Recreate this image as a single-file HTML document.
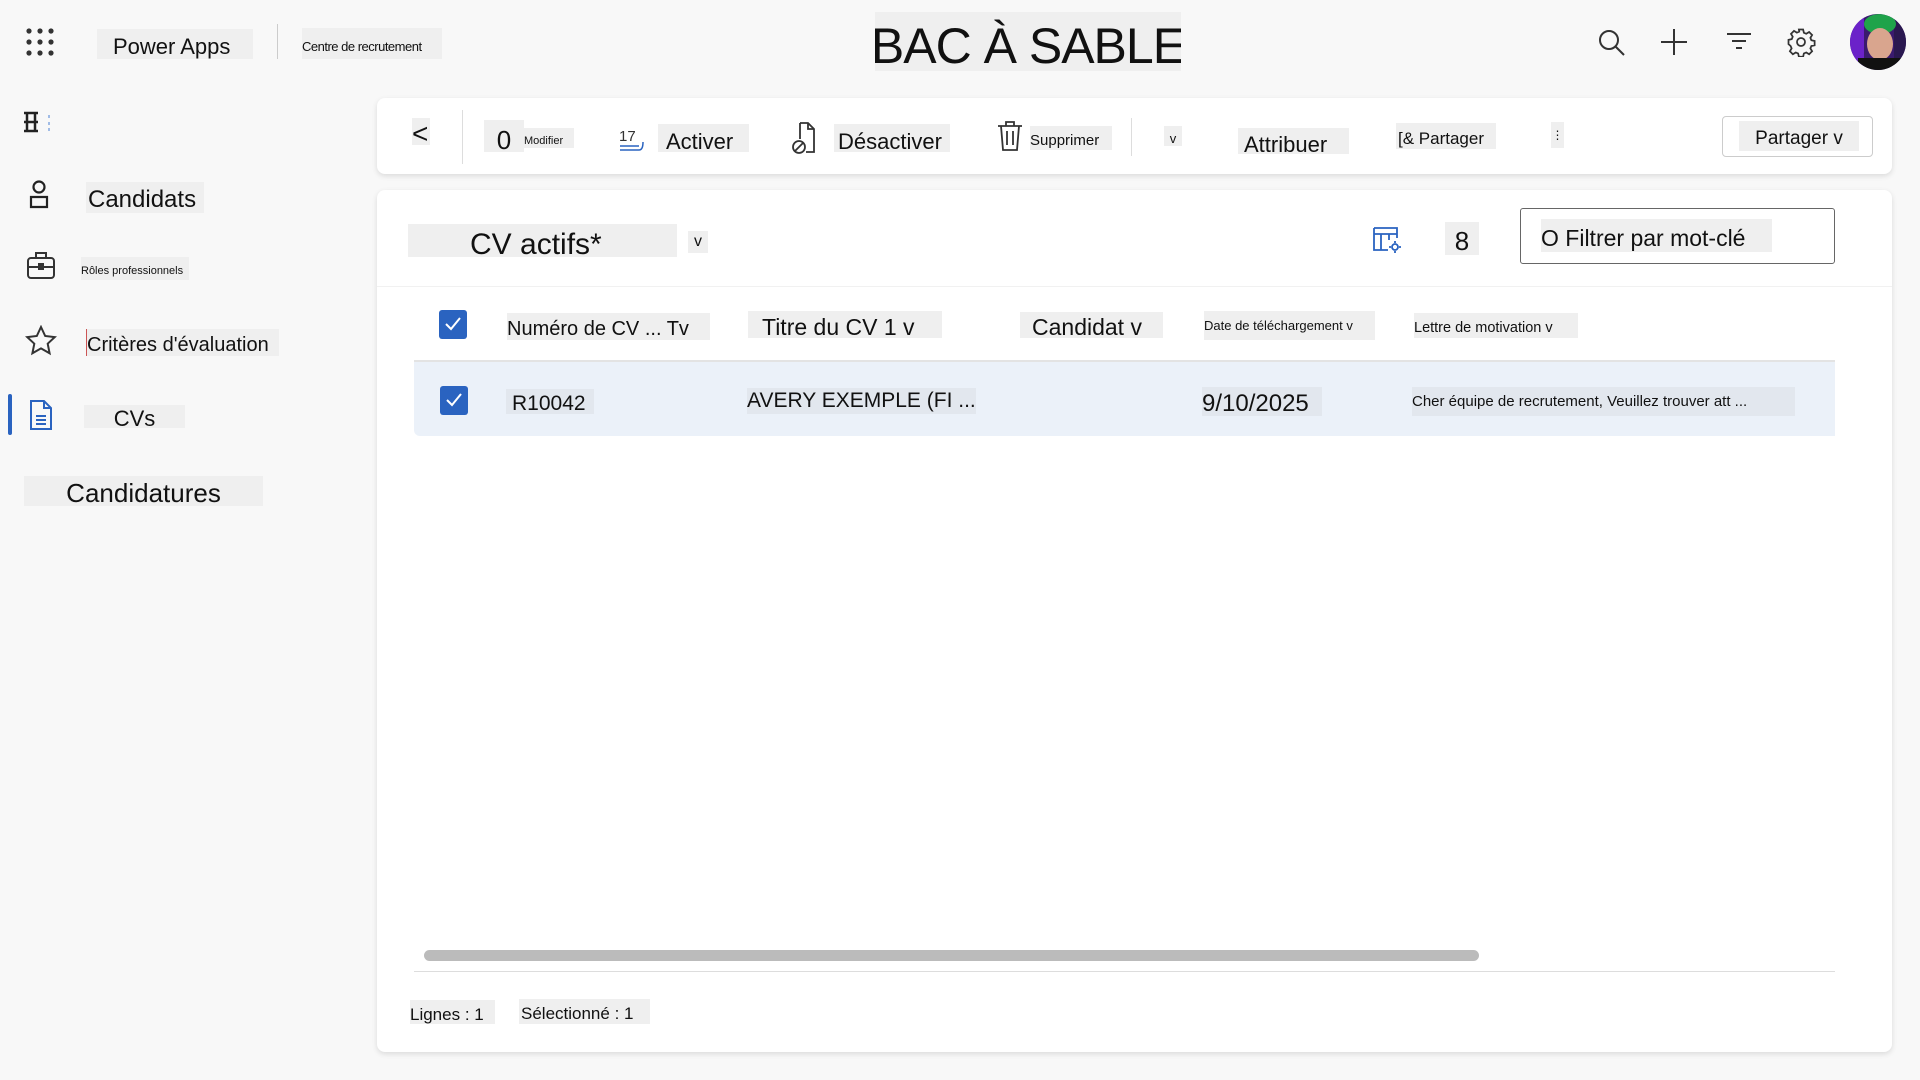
<!DOCTYPE html>
<html><head><meta charset="utf-8"><style>
*{margin:0;padding:0;box-sizing:border-box}
body{width:1920px;height:1080px;background:#f8f8f8;position:relative;overflow:hidden;font-family:"Liberation Sans",sans-serif;color:#111}
.t{position:absolute;background:#efefef;white-space:nowrap;overflow:hidden;display:flex;align-items:center}
.d{padding-top:5px}
svg{position:absolute}
.card{position:absolute;background:#fff;border-radius:8px;box-shadow:0 2px 6px rgba(0,0,0,.12)}
.cb{position:absolute;width:28px;height:29px;background:#2a63c0;border-radius:3px}
</style></head><body>

<svg style="left:26px;top:28px" width="30" height="30" viewBox="0 0 30 30" fill="#333">
<circle cx="3" cy="3" r="2.6"/><circle cx="14" cy="3" r="2.6"/><circle cx="25" cy="3" r="2.6"/>
<circle cx="3" cy="14" r="2.6"/><circle cx="14" cy="14" r="2.6"/><circle cx="25" cy="14" r="2.6"/>
<circle cx="3" cy="25" r="2.6"/><circle cx="14" cy="25" r="2.6"/><circle cx="25" cy="25" r="2.6"/></svg>
<div class="t d" style="left:97px;top:29px;width:156px;height:30px;font-size:22px;padding-left:16px">Power Apps</div>
<div style="position:absolute;left:277px;top:24px;width:1px;height:35px;background:#ccc"></div>
<div class="t d" style="left:302px;top:28px;width:140px;height:31px;font-size:13px;letter-spacing:-0.5px">Centre de recrutement</div>
<div class="t" style="left:875px;top:12px;width:306px;height:59px;font-size:50px;justify-content:center;letter-spacing:-1px;padding-top:8px">BAC À SABLE</div>

<svg style="left:1596px;top:27px" width="32" height="32" viewBox="0 0 32 32" fill="none" stroke="#333" stroke-width="2"><circle cx="13" cy="13" r="9"/><path d="M19.5 19.5L28 28"/></svg>
<svg style="left:1660px;top:28px" width="28" height="28" viewBox="0 0 28 28" stroke="#333" stroke-width="2"><path d="M14 1V27M1 14H27"/></svg>
<svg style="left:1726px;top:31px" width="26" height="22" viewBox="0 0 26 22" stroke="#333" stroke-width="2"><path d="M1 3H25M6 10H20M10 17H16"/></svg>
<svg style="left:1786px;top:27px" width="30" height="30" viewBox="0 0 24 24" fill="none" stroke="#333" stroke-width="1.4"><circle cx="12" cy="12" r="3.2"/><path d="M10.3 2h3.4l.6 2.6 1.9.8 2.3-1.4 2.4 2.4-1.4 2.3.8 1.9 2.6.6v3.4l-2.6.6-.8 1.9 1.4 2.3-2.4 2.4-2.3-1.4-1.9.8-.6 2.6h-3.4l-.6-2.6-1.9-.8-2.3 1.4-2.4-2.4 1.4-2.3-.8-1.9L2 13.7v-3.4l2.6-.6.8-1.9L4 5.5l2.4-2.4 2.3 1.4 1.9-.8z"/></svg>
<svg style="left:1850px;top:14px" width="56" height="56" viewBox="0 0 56 56"><defs><clipPath id="c"><circle cx="28" cy="28" r="28"/></clipPath></defs><g clip-path="url(#c)"><rect width="56" height="56" fill="#3a1a6e"/><rect x="0" y="0" width="14" height="56" fill="#6b22c9"/><rect x="44" y="0" width="12" height="56" fill="#2a1850"/><ellipse cx="30" cy="10" rx="16" ry="10" fill="#1fa34a"/><ellipse cx="30" cy="30" rx="13" ry="16" fill="#d9a58e"/><rect x="8" y="44" width="44" height="14" fill="#111"/></g></svg>

<svg style="left:22px;top:110px" width="30" height="26" viewBox="0 0 30 26" stroke="#222" stroke-width="2.5"><path d="M2 3H16M2 12H16M2 21H16M5 3V21M13 3V21"/><path d="M27 5V8M27 12V15M27 18V21" stroke="#4a7fd4" stroke-width="1"/></svg>
<svg style="left:28px;top:180px" width="22" height="30" viewBox="0 0 22 30" fill="none" stroke="#222" stroke-width="2.2"><circle cx="11" cy="7" r="5.5"/><path d="M3 17H19V27H3Z"/></svg>
<div class="t d" style="left:86px;top:182px;width:118px;height:31px;font-size:24px;padding-left:2px">Candidats</div>
<svg style="left:26px;top:250px" width="30" height="30" viewBox="0 0 30 30" fill="none" stroke="#333" stroke-width="2"><rect x="2" y="8" width="26" height="20" rx="3"/><path d="M10 8V3H20V8M2 17H28"/><rect x="13" y="14" width="4" height="5" fill="#333"/></svg>
<div class="t d" style="left:81px;top:257px;width:108px;height:23px;font-size:11px">Rôles professionnels</div>
<svg style="left:25px;top:325px" width="32" height="32" viewBox="0 0 32 32" fill="none" stroke="#333" stroke-width="2"><path d="M16 2l4.2 9 9.6 1.1-7.1 6.6 1.9 9.6L16 23.4l-8.6 4.9 1.9-9.6-7.1-6.6 9.6-1.1z"/></svg>
<div class="t d" style="left:86px;top:329px;width:193px;height:27px;font-size:20px;border-left:1px solid #c55">Critères d'évaluation</div>
<div style="position:absolute;left:8px;top:394px;width:4px;height:41px;background:#2a63c0;border-radius:2px"></div>
<svg style="left:29px;top:399px" width="24" height="32" viewBox="0 0 24 32" fill="none" stroke="#2a63c0" stroke-width="2"><path d="M2 2H15L22 9V30H2Z"/><path d="M15 2V9H22M7 17H17M7 21H17M7 25H17"/></svg>
<div class="t d" style="left:84px;top:405px;width:101px;height:23px;font-size:22px;justify-content:center">CVs</div>
<div class="t d" style="left:24px;top:476px;width:239px;height:30px;font-size:26px;justify-content:center">Candidatures</div>

<div class="card" style="left:377px;top:98px;width:1515px;height:76px"></div>
<div class="t d" style="left:412px;top:118px;width:18px;height:27px;font-size:28px">&lt;</div>
<div style="position:absolute;left:462px;top:110px;width:1px;height:54px;background:#ddd"></div>
<div class="t" style="left:484px;top:120px;width:40px;height:32px;font-size:26px;justify-content:center;padding-top:8px">0</div>
<div class="t" style="left:524px;top:128px;width:50px;height:20px;font-size:11px;padding-top:5px">Modifier</div>
<svg style="left:617px;top:125px" width="28" height="28" viewBox="0 0 28 28"><text x="2" y="16" font-size="15" font-family="Liberation Sans" fill="#333">17</text><path d="M3 21H22M3 25H22C25 25 26 22 26 17" stroke="#2a63c0" stroke-width="1.5" fill="none"/></svg>
<div class="t" style="left:658px;top:124px;width:91px;height:28px;font-size:22px;padding-left:8px;padding-top:8px">Activer</div>
<svg style="left:791px;top:121px" width="26" height="34" viewBox="0 0 26 34" fill="none" stroke="#333" stroke-width="1.8"><path d="M9 2H17L23 8V31H15M9 2V18"/><path d="M17 2V8H23"/><circle cx="8" cy="26" r="6"/><path d="M4 30L12 22"/></svg>
<div class="t" style="left:834px;top:124px;width:116px;height:28px;font-size:22px;padding-left:4px;padding-top:8px">Désactiver</div>
<svg style="left:996px;top:120px" width="28" height="32" viewBox="0 0 28 32" fill="none" stroke="#333" stroke-width="1.8"><path d="M2 6H26M10 6V2H18V6M5 6L7 30H21L23 6M11 11V25M17 11V25"/></svg>
<div class="t" style="left:1030px;top:126px;width:82px;height:24px;font-size:15px;padding-top:5px">Supprimer</div>
<div style="position:absolute;left:1131px;top:118px;width:1px;height:38px;background:#ddd"></div>
<div class="t" style="left:1164px;top:126px;width:18px;height:20px;font-size:13px;justify-content:center;padding-top:4px">v</div>
<div class="t" style="left:1238px;top:128px;width:111px;height:26px;font-size:22px;padding-left:6px;padding-top:8px">Attribuer</div>
<div class="t" style="left:1396px;top:123px;width:100px;height:26px;font-size:17px;padding-left:2px;padding-top:5px">[&amp; Partager</div>
<div class="t" style="left:1551px;top:122px;width:13px;height:26px;font-size:12px;justify-content:center">⋮</div>
<div style="position:absolute;left:1722px;top:116px;width:151px;height:41px;border:1px solid #ccc;border-radius:4px;background:#fff"></div>
<div class="t" style="left:1739px;top:121px;width:120px;height:30px;font-size:19px;justify-content:center;padding-top:5px">Partager v</div>

<div class="card" style="left:377px;top:190px;width:1515px;height:862px"></div>
<div class="t" style="left:408px;top:224px;width:269px;height:33px;font-size:30px;padding-left:62px;padding-top:8px">CV actifs*</div>
<div class="t" style="left:688px;top:231px;width:20px;height:22px;font-size:16px;justify-content:center">v</div>
<svg style="left:1372px;top:226px" width="30" height="28" viewBox="0 0 30 28" fill="none" stroke="#2a63c0" stroke-width="1.8"><path d="M2 2H25V12M2 2V24H16M2 8H25M9 8V24M17 8V14"/><circle cx="23" cy="21" r="3"/><path d="M23 15V17M23 25V27M17 21H19M27 21H29"/></svg>
<div class="t d" style="left:1445px;top:222px;width:34px;height:33px;font-size:26px;justify-content:center">8</div>
<div style="position:absolute;left:1520px;top:208px;width:315px;height:56px;border:1px solid #666;border-radius:3px;background:#fff"></div>
<div class="t d" style="left:1541px;top:219px;width:231px;height:33px;font-size:23px">O Filtrer par mot-clé</div>
<div style="position:absolute;left:377px;top:286px;width:1515px;height:1px;background:#f1f1f1"></div>

<div class="cb" style="left:439px;top:310px"></div>
<svg style="left:443px;top:314px" width="20" height="20" viewBox="0 0 20 20" fill="none" stroke="#fff" stroke-width="2"><path d="M3 10L8 15L17 4"/></svg>
<div class="t d" style="left:507px;top:313px;width:203px;height:27px;font-size:20px">Numéro de CV ... Tv</div>
<div class="t d" style="left:748px;top:311px;width:194px;height:27px;font-size:23px;padding-left:14px">Titre du CV 1 v</div>
<div class="t d" style="left:1020px;top:312px;width:143px;height:26px;font-size:23px;padding-left:12px">Candidat v</div>
<div class="t" style="left:1204px;top:311px;width:171px;height:29px;font-size:13px">Date de téléchargement v</div>
<div class="t d" style="left:1414px;top:313px;width:164px;height:25px;font-size:14.5px">Lettre de motivation v</div>
<div style="position:absolute;left:414px;top:360px;width:1421px;height:2px;background:#e3e3e3"></div>

<div style="position:absolute;left:414px;top:362px;width:1421px;height:74px;background:#ebf1f9;border-radius:0 0 0 6px"></div>
<div class="cb" style="left:440px;top:386px"></div>
<svg style="left:444px;top:390px" width="20" height="20" viewBox="0 0 20 20" fill="none" stroke="#fff" stroke-width="2"><path d="M3 10L8 15L17 4"/></svg>
<div class="t d" style="left:506px;top:389px;width:88px;height:25px;font-size:21px;padding-left:6px;background:#e2e7ee">R10042</div>
<div class="t" style="left:747px;top:388px;width:229px;height:26px;font-size:21px;background:#e2e7ee">AVERY EXEMPLE (FI ...</div>
<div class="t d" style="left:1202px;top:387px;width:120px;height:29px;font-size:24px;background:#e2e7ee">9/10/2025</div>
<div class="t" style="left:1412px;top:387px;width:383px;height:29px;font-size:15px;background:#e2e7ee">Cher équipe de recrutement, Veuillez trouver att ...</div>

<div style="position:absolute;left:424px;top:950px;width:1055px;height:11px;background:#bbb;border-radius:6px"></div>
<div style="position:absolute;left:414px;top:971px;width:1421px;height:1px;background:#ddd"></div>
<div class="t d" style="left:410px;top:1000px;width:85px;height:24px;font-size:17px">Lignes : 1</div>
<div class="t d" style="left:519px;top:999px;width:131px;height:25px;font-size:17px;padding-left:2px">Sélectionné : 1</div>
</body></html>
